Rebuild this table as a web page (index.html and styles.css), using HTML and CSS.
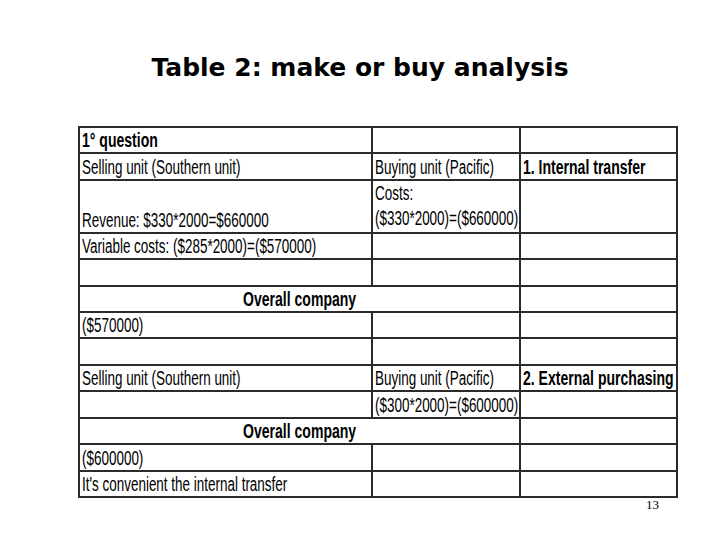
FILE: index.html
```html
<!DOCTYPE html>
<html>
<head>
<meta charset="utf-8">
<link rel="stylesheet" href="styles.css">
</head>
<body>
<div class="slide">
  <h1 class="title">Table 2: make or buy analysis</h1>
  <table class="grid">
    <colgroup><col class="c1"><col class="c2"><col class="c3"></colgroup>
    <tr><td class="b"><span class="n">1° question</span></td><td></td><td></td></tr>
    <tr><td><span class="n">Selling unit (Southern unit)</span></td><td><span class="n">Buying unit (Pacific)</span></td><td class="b"><span class="n">1. Internal transfer</span></td></tr>
    <tr class="tall"><td><span class="n">Revenue: $330*2000=$660000</span></td><td class="two"><span class="n">Costs:</span><br><span class="n">($330*2000)=($660000)</span></td><td></td></tr>
    <tr><td><span class="n">Variable costs: ($285*2000)=($570000)</span></td><td></td><td></td></tr>
    <tr><td></td><td></td><td></td></tr>
    <tr><td class="b mid" colspan="2"><span class="n">Overall company</span></td><td></td></tr>
    <tr><td><span class="n">($570000)</span></td><td></td><td></td></tr>
    <tr><td></td><td></td><td></td></tr>
    <tr><td><span class="n">Selling unit (Southern unit)</span></td><td><span class="n">Buying unit (Pacific)</span></td><td class="b"><span class="n">2. External purchasing</span></td></tr>
    <tr><td></td><td><span class="n">($300*2000)=($600000)</span></td><td></td></tr>
    <tr><td class="b mid" colspan="2"><span class="n">Overall company</span></td><td></td></tr>
    <tr><td><span class="n">($600000)</span></td><td></td><td></td></tr>
    <tr><td><span class="n">It's convenient the internal transfer</span></td><td></td><td></td></tr>
  </table>
  <div class="pageno">13</div>
</div>
</body>
</html>
```
FILE: styles.css
```css
html, body { margin: 0; padding: 0; background: #fff; }
.slide { width: 720px; height: 540px; position: relative; overflow: hidden; }
.title {
  margin: 0;
  padding-top: 53px;
  height: 73px;
  box-sizing: border-box;
  text-align: center;
  font-family: "DejaVu Sans", sans-serif;
  font-weight: bold;
  font-size: 25px;
  line-height: 30px;
  color: #000;
}
.grid {
  margin-left: 78px;
  margin-top: 53px;
  border-collapse: collapse;
  table-layout: fixed;
  width: 598px;
  font-family: "Liberation Sans", Arial, sans-serif;
  font-size: 19.5px;
  color: #000;
}
.c1 { width: 293px; }
.c2 { width: 148px; }
.c3 { width: 157px; }
.grid td {
  border: 2px solid #2b2b2b;
  height: 24.43px;
  padding: 0 2px;
  vertical-align: bottom;
  white-space: nowrap;
  line-height: 24px;
}
.grid tr.tall td { height: 50.86px; }
.grid td.two { line-height: 25px; vertical-align: top; }
.n {
  display: inline-block;
  transform: scaleX(0.69);
  transform-origin: 0 50%;
}
.b { font-weight: bold; }
.b .n { transform: scaleX(0.72); }
.mid { text-align: center; }
.mid .n { transform-origin: 50% 50%; }
.pageno {
  position: absolute;
  left: 646px;
  top: 497px;
  font-family: "Liberation Serif", serif;
  font-size: 13px;
}
```
